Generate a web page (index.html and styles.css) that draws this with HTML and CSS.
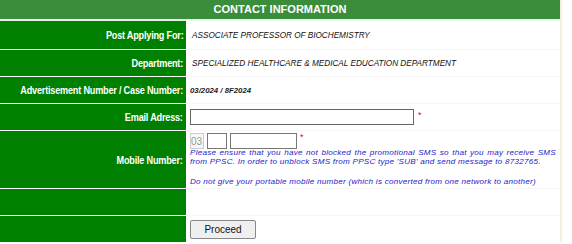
FILE: index.html
```html
<!DOCTYPE html>
<html>
<head>
<meta charset="utf-8">
<link rel="stylesheet" href="styles.css">
</head>
<body>
<div class="form">
  <div class="head">CONTACT INFORMATION</div>
  <div class="rows">
    <div class="row r1">
      <div class="label"><span>Post Applying For:</span></div>
      <div class="value"><span class="val">ASSOCIATE PROFESSOR OF BIOCHEMISTRY</span></div>
    </div>
    <div class="row">
      <div class="label"><span>Department:</span></div>
      <div class="value"><span class="val">SPECIALIZED HEALTHCARE &amp; MEDICAL EDUCATION DEPARTMENT</span></div>
    </div>
    <div class="row">
      <div class="label"><span>Advertisement Number / Case Number:</span></div>
      <div class="value"><span class="adv">03/2024 / 8F2024</span></div>
    </div>
    <div class="row">
      <div class="label"><span>Email Adress:</span></div>
      <div class="value"><input class="email" type="text"><span class="req">*</span></div>
    </div>
    <div class="row r5">
      <div class="label"><span>Mobile Number:</span></div>
      <div class="value col">
        <div class="mob"><input class="m1" type="text" value="03" disabled><input class="m2" type="text"><input class="m3" type="text"><span class="req">*</span></div>
        <p class="note">Please ensure that you have not blocked the promotional SMS so that you may receive SMS from PPSC. In order to unblock SMS from PPSC type 'SUB' and send message to 8732765.</p>
        <p class="note note2">Do not give your portable mobile number (which is converted from one network to another)</p>
      </div>
    </div>
    <div class="row">
      <div class="label"></div>
      <div class="value"></div>
    </div>
    <div class="row">
      <div class="label"></div>
      <div class="value"><button class="btn" type="button">Proceed</button></div>
    </div>
  </div>
</div>
</body>
</html>
```
FILE: styles.css
```css
html, body { margin: 0; padding: 0; background: #fff; }
body { font-family: "Liberation Sans", Arial, sans-serif; }
.form { width: 560px; border-right: 2px solid #f2f2dc; }
.head {
  height: 19px; line-height: 19px; background: #3a8d3a; color: #fff;
  font-weight: bold; font-size: 11px; text-align: center;
  border-bottom: 2px solid #e6f4e6;
}
.rows { display: grid; row-gap: 1px; background: #fff; }
.row { display: grid; grid-template-columns: 186px 1fr; height: 26px; }
.row.r1 { height: 28px; }
.row.r5 { height: 57px; }
.label {
  background: #008000; color: #fff; font-weight: bold; font-size: 11px;
  letter-spacing: -0.25px; display: flex; align-items: center; justify-content: flex-end;
  padding-right: 3px; white-space: nowrap; overflow: hidden;
}
.label span { display: inline-block; transform: scaleX(0.83); transform-origin: right center; }
.value {
  display: flex; align-items: center; padding-left: 4px;
  border-bottom: 1px solid #f6f6f6; margin-bottom: -1px;
}
.val { font-style: italic; font-size: 8.2px; color: #111; padding-left: 2px; }
.adv { font-style: italic; font-weight: bold; font-size: 7.8px; color: #222; }
.email {
  width: 224px; height: 16px; box-sizing: border-box; border: 1px solid #666;
  margin: 0; padding: 0; background: #fff;
}
.req { color: #e00; font-size: 9px; margin-left: 4px; }
.row:nth-child(4) .req { margin-top: -4px; }
.col { flex-direction: column; align-items: flex-start; justify-content: flex-start; padding-top: 2px; }
.mob { display: flex; align-items: flex-start; }
.mob input {
  height: 16px; box-sizing: border-box; border: 1px solid #777; margin: 0 3px 0 0;
  padding: 0 1px; background: #fff; font-family: "Liberation Sans", Arial, sans-serif; font-size: 10px;
}
.mob .m1 { width: 14px; border-color: #ccc; color: #999; background: #f8f8f8; padding: 0; }
.mob .m2 { width: 20px; }
.mob .m3 { width: 67px; margin-right: 0; }
.mob .req { margin-left: 3px; margin-top: -1px; }
.note {
  margin: 0; color: #1a1acc; font-style: italic; font-size: 8.1px; line-height: 8.5px;
  text-align: justify; width: 366px; letter-spacing: 0.25px;
}
.note2 { margin-top: 12px; text-align: left; }
.btn {
  width: 66px; height: 19px; margin: 0; padding: 0;
  background: #efefef; border: 1px solid #888; border-radius: 2px;
  font-family: "Liberation Sans", Arial, sans-serif; font-size: 10px; color: #111;
}
```
